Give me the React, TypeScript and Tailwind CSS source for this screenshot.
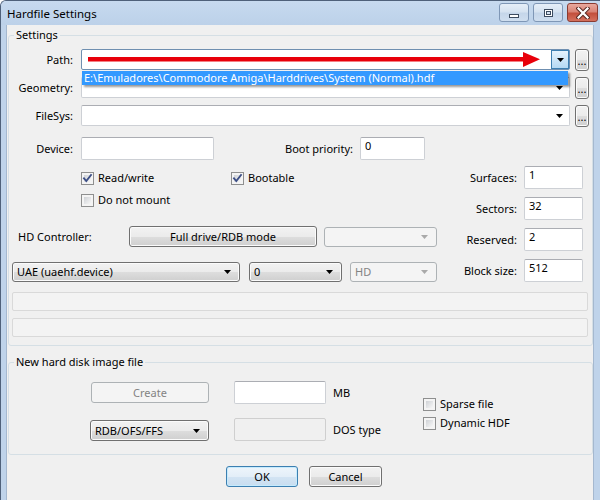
import React from "react";

const btn =
  "box-border border border-[#707070] rounded-[3px] bg-[linear-gradient(#f2f2f2_0%,#ebebeb_50%,#dddddd_51%,#cfcfcf_100%)] shadow-[inset_0_0_0_1px_#fbfbfb]";

function Arrow({ color = "#000" }: { color?: string }) {
  return (
    <svg width="7" height="4" viewBox="0 0 7 4" className="shrink-0">
      <polygon points="0,0 7,0 3.5,4" fill={color} />
    </svg>
  );
}

function TextBox({
  className,
  value,
  disabled,
}: {
  className: string;
  value?: string;
  disabled?: boolean;
}) {
  return (
    <div
      className={`box-border border rounded-[2px] pl-[4px] leading-[16px] ${
        disabled
          ? "border-[#cfcfcf] bg-[#f0f0f0]"
          : "border-[#cdd0d5] border-t-[#abadb3] bg-white"
      } ${className}`}
    >
      {value}
    </div>
  );
}

function EditCombo({ className }: { className: string }) {
  return (
    <div
      className={`box-border border border-[#cdd0d5] border-t-[#abadb3] rounded-[2px] bg-white flex items-center justify-end pr-[6px] ${className}`}
    >
      <Arrow />
    </div>
  );
}

function DropCombo({ className, text }: { className: string; text: string }) {
  return (
    <div className={`${btn} flex items-center pl-[4px] pr-[8px] ${className}`}>
      <span className="flex-1 leading-[16px]">{text}</span>
      <Arrow />
    </div>
  );
}

function DisabledCombo({ className, text }: { className: string; text?: string }) {
  return (
    <div
      className={`box-border border border-[#adb2b5] rounded-[3px] bg-[#f4f4f4] flex items-center pl-[4px] pr-[8px] text-[#838383] ${className}`}
    >
      <span className="flex-1 leading-[16px]">{text}</span>
      <Arrow color="#a9a9a9" />
    </div>
  );
}

function Ellipsis() {
  return (
    <div className={`${btn} ml-[5px] w-[14px] h-[22px] flex items-end justify-center pb-[4px] leading-[10px] text-[11px]`}>
      ...
    </div>
  );
}

function CheckBox({ checked }: { checked?: boolean }) {
  return (
    <div className="relative w-[13px] h-[13px] box-border border border-[#8e8f8f] bg-[#f4f4f4] p-[2px] shrink-0">
      <div className="w-full h-full bg-linear-to-br from-[#cfd2d6] to-[#f7f7f7]" />
      {checked && (
        <svg
          className="absolute left-[-1px] top-[-1px]"
          width="13"
          height="13"
          viewBox="0 0 13 13"
        >
          <path
            d="M3 6.3 L5.3 9 L10 3"
            fill="none"
            stroke="#3d4f86"
            strokeWidth="1.9"
            strokeLinecap="square"
          />
        </svg>
      )}
    </div>
  );
}

function CheckRow({
  checked,
  label,
  className,
}: {
  checked?: boolean;
  label: string;
  className?: string;
}) {
  return (
    <div className={`flex items-center h-[16px] ${className ?? ""}`}>
      <CheckBox checked={checked} />
      <span className="ml-[4px] leading-[16px]">{label}</span>
    </div>
  );
}

function Group({
  title,
  className,
  children,
}: {
  title: string;
  className: string;
  children: React.ReactNode;
}) {
  return (
    <div
      className={`relative box-border border border-[#d5dfe5] rounded-[3px] ml-[1px] w-[585px] ${className}`}
    >
      <div className="absolute left-[5px] top-[-9px] px-[2px] bg-[#f0f0f0] leading-[16px]">
        {title}
      </div>
      {children}
    </div>
  );
}

function TitleButton({ kind }: { kind: "min" | "max" | "close" }) {
  if (kind === "close") {
    return (
      <div className="ml-[4px] w-[31px] h-[19px] box-border border border-[#8a3b31] rounded-[3px] bg-[linear-gradient(#e9a99e_0%,#d98476_45%,#c3503d_55%,#d4705d_100%)] flex items-center justify-center">
        <svg width="14" height="12" viewBox="0 0 14 12">
          <path
            d="M2.5 1.5 L11.5 10.5 M11.5 1.5 L2.5 10.5"
            stroke="#5b2a24"
            strokeWidth="4.2"
            strokeLinecap="square"
          />
          <path
            d="M2.5 1.5 L11.5 10.5 M11.5 1.5 L2.5 10.5"
            stroke="#ffffff"
            strokeWidth="2.2"
            strokeLinecap="square"
          />
        </svg>
      </div>
    );
  }
  return (
    <div
      className={`${kind === "max" ? "ml-[4px]" : ""} w-[30px] h-[19px] box-border border border-[#7f97b6] rounded-[3px] bg-[linear-gradient(#e6eef8_0%,#d6e3f1_45%,#c5d6ea_55%,#cfdeef_100%)] flex items-center justify-center`}
    >
      {kind === "min" ? (
        <div className="mt-[6px] w-[10px] h-[4px] box-border border border-[#3d4c60] bg-white" />
      ) : (
        <div className="w-[9px] h-[8px] box-border border border-[#3d4c60] bg-white p-[1px]">
          <div className="w-full h-full border border-[#3d4c60] box-border bg-[#d6e3f1]" />
        </div>
      )}
    </div>
  );
}

export default function App() {
  return (
    <div className="relative w-[600px] h-[500px] overflow-hidden box-border border-l border-t border-[#4f617a] rounded-tl-[6px] bg-[#bfd3ea] font-['Noto_Sans',sans-serif] text-[11px] text-black flex flex-col">
      {/* Title bar */}
      <div className="h-[24px] shrink-0 flex bg-linear-to-b from-[#c7daef] to-[#bcd1e9]">
        <div className="ml-[6px] mt-[5px] leading-[16px] text-[11.5px]">Hardfile Settings</div>
        <div className="flex-1" />
        <div className="flex mt-[2px] mr-[2px] h-[19px]">
          <TitleButton kind="min" />
          <TitleButton kind="max" />
          <TitleButton kind="close" />
        </div>
      </div>

      <div className="flex-1 flex">
        <div className="w-[5px] shrink-0" />
        {/* Client area */}
        <div className="w-[588px] shrink-0 box-border border-l border-r border-[#a5b8cf] bg-[#f0f0f0] flex flex-col">
          <Group title="Settings" className="mt-[10px] h-[311px]">
            {/* Path */}
            <div className="flex items-start mt-[13px] h-[22px]">
              <div className="w-[64px] h-[21px] flex items-center justify-end leading-[16px]">Path:</div>
              <div className="relative ml-[8px] w-[489px] h-[21px] box-border border border-[#6f8fb0] rounded-[2px] bg-white flex">
                <div className="flex-1" />
                <div className="w-[18px] h-full box-border border border-[#3c7fb1] bg-linear-to-b from-[#e4f3fd] to-[#b5d9f3] flex items-center justify-center">
                  <Arrow />
                </div>
                <div className="absolute left-0 top-[21px] w-[486px] h-[14px] bg-[#3399ff] text-white leading-[14px] pl-[2px] shadow-[2px_2px_2px_rgba(0,0,0,0.4)] z-10 whitespace-nowrap">
                  {"E:\\Emuladores\\Commodore Amiga\\Harddrives\\System (Normal).hdf"}
                </div>
              </div>
              <Ellipsis />
            </div>
            {/* Geometry */}
            <div className="flex items-start mt-[6px] h-[22px]">
              <div className="w-[64px] h-[21px] flex items-center justify-end leading-[16px]">Geometry:</div>
              <EditCombo className="ml-[8px] w-[489px] h-[21px]" />
              <Ellipsis />
            </div>
            {/* FileSys */}
            <div className="flex items-start mt-[6px] h-[22px]">
              <div className="w-[64px] h-[21px] flex items-center justify-end leading-[16px]">FileSys:</div>
              <EditCombo className="ml-[8px] w-[489px] h-[21px]" />
              <Ellipsis />
            </div>
            {/* Device */}
            <div className="flex items-center mt-[10px] h-[23px]">
              <div className="w-[64px] text-right leading-[16px]">Device:</div>
              <TextBox className="ml-[8px] w-[133px] h-[23px]" />
              <div className="w-[139px] text-right leading-[16px]">Boot priority:</div>
              <TextBox className="ml-[7px] w-[65px] h-[23px]" value="0" />
            </div>

            {/* Two columns */}
            <div className="flex items-start">
              <div className="w-[431px] flex flex-col">
                <div className="flex mt-[10px] ml-[72px]">
                  <CheckRow checked label="Read/write" className="w-[150px]" />
                  <CheckRow checked label="Bootable" />
                </div>
                <CheckRow label="Do not mount" className="mt-[6px] ml-[72px]" />
                <div className="flex items-center mt-[18px] h-[21px]">
                  <div className="ml-[9px] w-[111px] leading-[16px]">HD Controller:</div>
                  <div className={`${btn} w-[188px] h-[21px] flex items-center justify-center leading-[16px]`}>
                    Full drive/RDB mode
                  </div>
                  <DisabledCombo className="ml-[7px] w-[113px] h-[20px]" />
                </div>
                <div className="flex items-center mt-[15px] h-[20px]">
                  <DropCombo className="ml-[3px] w-[228px] h-[20px]" text="UAE (uaehf.device)" />
                  <DropCombo className="ml-[9px] w-[93px] h-[20px]" text="0" />
                  <DisabledCombo className="ml-[8px] w-[87px] h-[20px]" text="HD" />
                </div>
              </div>
              <div className="mt-[6px] flex flex-col gap-[8px]">
                {[
                  ["Surfaces:", "1"],
                  ["Sectors:", "32"],
                  ["Reserved:", "2"],
                  ["Block size:", "512"],
                ].map(([l, v]) => (
                  <div key={l} className="flex items-center h-[23px]">
                    <div className="w-[77px] text-right leading-[16px]">{l}</div>
                    <TextBox className="ml-[7px] w-[59px] h-[23px]" value={v} />
                  </div>
                ))}
              </div>
            </div>

            <div className="mt-[10px] ml-[3px] w-[576px] h-[19px] box-border border border-[#d9d9d9] rounded-[2px] bg-[#f3f3f3]" />
            <div className="mt-[7px] ml-[3px] w-[576px] h-[19px] box-border border border-[#d9d9d9] rounded-[2px] bg-[#f3f3f3]" />
          </Group>

          <Group title="New hard disk image file" className="mt-[16px] h-[93px]">
            <div className="flex items-start">
              <div className="ml-[81px] mt-[19px] w-[119px] flex flex-col">
                <div className="box-border ml-[1px] w-[118px] h-[21px] border border-[#adb2b5] rounded-[3px] bg-[#f4f4f4] text-[#838383] flex items-center justify-center leading-[16px]">
                  Create
                </div>
                <DropCombo className="mt-[17px] w-[119px] h-[21px]" text="RDB/OFS/FFS" />
              </div>
              <div className="ml-[25px] mt-[18px] w-[92px] flex flex-col">
                <TextBox className="w-[92px] h-[23px]" />
                <TextBox className="mt-[14px] w-[92px] h-[23px]" disabled />
              </div>
              <div className="ml-[7px] mt-[18px] w-[90px] flex flex-col">
                <div className="h-[23px] flex items-center leading-[16px]">MB</div>
                <div className="mt-[14px] h-[23px] flex items-center leading-[16px]">DOS type</div>
              </div>
              <div className="mt-[33px] flex flex-col gap-[3px]">
                <CheckRow label="Sparse file" />
                <CheckRow label="Dynamic HDF" />
              </div>
            </div>
          </Group>

          <div className="flex mt-[11px]">
            <div className="ml-[219px] w-[72px] h-[21px] box-border border border-[#3c7fb1] rounded-[3px] bg-[linear-gradient(#eef5fb_0%,#e3eef8_50%,#d3e4f3_51%,#c8ddf0_100%)] shadow-[inset_0_0_0_1px_#c6ebfd] flex items-center justify-center leading-[16px]">
              OK
            </div>
            <div className={`${btn} ml-[11px] w-[73px] h-[21px] flex items-center justify-center leading-[16px]`}>
              Cancel
            </div>
          </div>
        </div>
        <div className="flex-1" />
      </div>

      {/* Red arrow annotation */}
      <svg
        className="absolute left-[87px] top-[50px] pointer-events-none"
        width="453"
        height="17"
        viewBox="0 0 453 17"
      >
        <rect x="0" y="6" width="438" height="4.5" fill="#e8000a" />
        <polygon points="435,1 452,8.3 435,16" fill="#e8000a" />
      </svg>
    </div>
  );
}
